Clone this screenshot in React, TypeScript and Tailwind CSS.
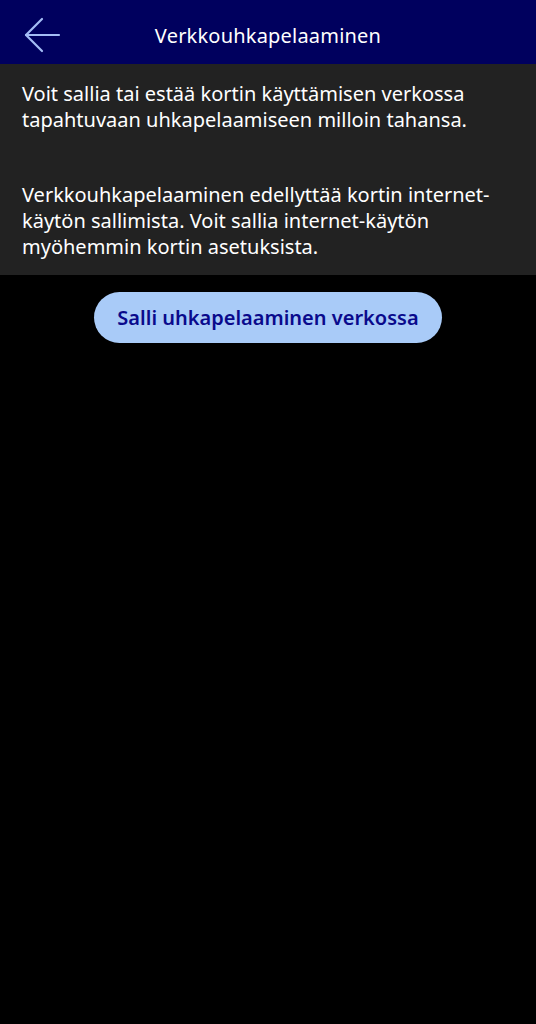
export default function App() {
  return (
    <div className="min-h-[1024px] w-full bg-black font-['Noto_Sans',sans-serif]">
      <header className="relative flex h-16 items-center justify-center bg-[#00005e] pt-[7px]">
        <button type="button" className="absolute left-[24px] top-[17px] text-[#a4bdf5]" aria-label="Takaisin">
          <svg width="37" height="36" viewBox="0 0 37 36" fill="none" stroke="currentColor" strokeWidth="2.2" strokeLinecap="round" strokeLinejoin="round">
            <path d="M35 18H2" />
            <path d="M18 2L2 18L18 34" />
          </svg>
        </button>
        <h1 className="text-[20px] tracking-[0.2px] text-white">Verkkouhkapelaaminen</h1>
      </header>

      <section className="bg-[#222222] px-[22px] pt-[17px] pb-[15px] text-[20px] leading-[26px] text-white">
        <p>
          Voit sallia tai estää kortin käyttämisen verkossa tapahtuvaan uhkapelaamiseen milloin tahansa.
        </p>
        <p className="mt-[49px]">
          Verkkouhkapelaaminen edellyttää kortin internet-käytön sallimista. Voit sallia internet-käytön myöhemmin
          kortin asetuksista.
        </p>
      </section>

      <div className="flex justify-center pt-[17px]">
        <button
          type="button"
          className="h-[51px] w-[348px] rounded-full bg-[#a9cbf8] text-[20px] font-semibold text-[#0a0a8c]"
        >
          Salli uhkapelaaminen verkossa
        </button>
      </div>
    </div>
  );
}
